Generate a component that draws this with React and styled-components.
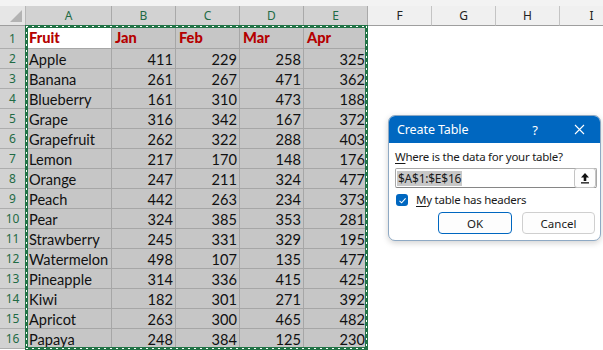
import React from "react";
import styled, { createGlobalStyle } from "styled-components";

const GlobalStyle = createGlobalStyle`
  html, body {
    margin: 0;
    padding: 0;
    background: #fff;
  }
  * {
    box-sizing: border-box;
  }
`;

const COLS = ["A", "B", "C", "D", "E", "F", "G", "H", "I"];
const SELECTED = 5;

const rows = [
  ["Fruit", "Jan", "Feb", "Mar", "Apr"],
  ["Apple", 411, 229, 258, 325],
  ["Banana", 261, 267, 471, 362],
  ["Blueberry", 161, 310, 473, 188],
  ["Grape", 316, 342, 167, 372],
  ["Grapefruit", 262, 322, 288, 403],
  ["Lemon", 217, 170, 148, 176],
  ["Orange", 247, 211, 324, 477],
  ["Peach", 442, 263, 234, 373],
  ["Pear", 324, 385, 353, 281],
  ["Strawberry", 245, 331, 329, 195],
  ["Watermelon", 498, 107, 135, 477],
  ["Pineapple", 314, 336, 415, 425],
  ["Kiwi", 182, 301, 271, 392],
  ["Apricot", 263, 300, 465, 482],
  ["Papaya", 248, 384, 125, 230],
];

const Sheet = styled.div`
  position: relative;
  width: 603px;
  height: 350px;
  overflow: hidden;
  background: #fff;
  display: grid;
  grid-template-columns: 26px 86px repeat(8, 64px);
  grid-template-rows: 6px 20px 23px repeat(15, 20px);
  font-family: Lato, "Liberation Sans", sans-serif;
`;

const Strip = styled.div`
  grid-column: 1 / -1;
  background: #f3f3f3;
`;

const Corner = styled.div`
  background: #e6e6e6;
  border-right: 1px solid #b7b7b7;
  border-bottom: 1px solid #9e9e9e;
  display: flex;
  align-items: flex-end;
  justify-content: flex-end;
  padding: 0 3px 3px 0;
`;

const ColHead = styled.div`
  background: ${(p) => (p.$selected ? "#d2d2d2" : "#f0f0f0")};
  color: ${(p) => (p.$selected ? "#1f6b45" : "#222")};
  border-right: 1px solid ${(p) => (p.$selected ? "#a9a9a9" : "#c4c4c4")};
  border-bottom: 1px solid #9e9e9e;
  font-family: "Noto Sans", "Open Sans", sans-serif;
  font-size: 12px;
  display: flex;
  align-items: center;
  justify-content: center;
  padding-bottom: 1px;
`;

const RowHead = styled.div`
  background: #d2d2d2;
  color: #1f6b45;
  border-right: 1px solid #9e9e9e;
  border-bottom: 1px solid #adadad;
  font-family: "Noto Sans", "Open Sans", sans-serif;
  font-size: 12px;
  display: flex;
  align-items: center;
  justify-content: center;
  padding-top: ${(p) => (p.$first ? "2px" : "0")};
`;

const Cell = styled.div`
  background: ${(p) => (p.$active ? "#fff" : p.$selected ? "#c6c6c6" : "#fff")};
  border-right: 1px solid ${(p) => (p.$selected ? "#a6a6a6" : "transparent")};
  border-bottom: 1px solid ${(p) => (p.$selected ? "#a6a6a6" : "transparent")};
  color: ${(p) => (p.$header ? "#b50000" : "#111")};
  font-weight: ${(p) => (p.$header ? 900 : 400)};
  font-size: 14.6px;
  display: flex;
  align-items: center;
  justify-content: ${(p) => (p.$num ? "flex-end" : "flex-start")};
  padding: ${(p) => (p.$num ? "1px 2px 0 0" : "1px 0 0 3px")};
  white-space: nowrap;
  overflow: hidden;
`;

const ants = "#fff 0 2px, transparent 2px 6px";

const Marquee = styled.div`
  position: absolute;
  left: 25px;
  top: 25px;
  width: 343px;
  height: 325px;
  border: 3px solid #217346;
  pointer-events: none;

  &::after {
    content: "";
    position: absolute;
    top: -2px;
    left: -2px;
    right: -2px;
    bottom: -2px;
    background:
      repeating-linear-gradient(90deg, ${ants}) top / 100% 1px no-repeat,
      repeating-linear-gradient(90deg, ${ants}) bottom / 100% 1px no-repeat,
      repeating-linear-gradient(180deg, ${ants}) left / 1px 100% no-repeat,
      repeating-linear-gradient(180deg, ${ants}) right / 1px 100% no-repeat;
  }
`;

const Dialog = styled.div`
  position: absolute;
  left: 388px;
  top: 115px;
  width: 213px;
  height: 126px;
  background: #fff;
  border: 1px solid #8ea9c4;
  border-radius: 7px;
  overflow: hidden;
  box-shadow: 0 2px 6px rgba(0, 0, 0, 0.18);
  display: flex;
  flex-direction: column;
  font-family: "Noto Sans", "Open Sans", sans-serif;
  font-size: 11px;
  color: #1a1a1a;
`;

const TitleBar = styled.div`
  height: 27px;
  background: #0067c0;
  color: #fff;
  display: flex;
  align-items: center;
  padding: 0 15px 0 8px;
`;

const Title = styled.span`
  flex: 1;
  font-size: 12.5px;
  letter-spacing: -0.1px;
`;

const Help = styled.span`
  font-size: 13px;
  margin-right: 36px;
`;

const Body = styled.div`
  flex: 1;
  display: flex;
  flex-direction: column;
  padding: 7px 3px 0 6px;
  letter-spacing: -0.25px;
`;

const Label = styled.div`
  line-height: 14px;
  font-size: 11.5px;
`;

const Key = styled.u`
  text-underline-offset: 2px;
`;

const RefBox = styled.div`
  margin-top: 4px;
  height: 20px;
  border: 1px solid #a8a8a8;
  border-bottom-color: #868686;
  border-radius: 2px;
  display: flex;
  align-items: center;
  padding: 0 1px 0 1px;
`;

const RefText = styled.span`
  flex: 1;
  display: flex;
  font-size: 12px;
  & > span {
    background: #c8c8c8;
    padding: 0 1px;
    line-height: 15px;
  }
`;

const PickButton = styled.button`
  width: 22px;
  height: 20px;
  margin-right: -1px;
  background: #fdfdfd;
  border: 1px solid #c4c4c4;
  border-radius: 3px;
  display: flex;
  align-items: center;
  justify-content: center;
  padding: 0;
`;

const CheckRow = styled.label`
  margin-top: 5px;
  margin-left: 1px;
  display: flex;
  align-items: center;
  gap: 8px;
  font-size: 11.5px;
  line-height: 14px;
`;

const Box = styled.span`
  width: 12px;
  height: 12px;
  border-radius: 3px;
  background: #0067c0;
  display: flex;
  align-items: center;
  justify-content: center;
`;

const Buttons = styled.div`
  margin-top: 5px;
  display: flex;
  justify-content: flex-end;
  gap: 10px;
  padding-right: 2px;
`;

const Button = styled.button`
  width: ${(p) => (p.$wide ? "74px" : "73px")};
  height: 22px;
  background: #fdfdfd;
  border: 1px solid ${(p) => (p.$primary ? "#0067c0" : "#cfcfcf")};
  border-radius: 4px;
  font-family: "Noto Sans", "Open Sans", sans-serif;
  font-size: 11.5px;
  color: #1a1a1a;
  padding: 0;
`;

const CornerMark = () => (
  <svg width="12" height="12" viewBox="0 0 12 12">
    <polygon points="12,0 12,12 0,12" fill="#b3b3b3" />
  </svg>
);

const CloseIcon = () => (
  <svg width="11" height="11" viewBox="0 0 11 11">
    <path d="M1 1 L10 10 M10 1 L1 10" stroke="#fff" strokeWidth="1.1" />
  </svg>
);

const UploadIcon = () => (
  <svg width="10" height="12" viewBox="0 0 10 12">
    <path d="M5 1 L9 5.5 L6.3 5.5 L6.3 9 L3.7 9 L3.7 5.5 L1 5.5 Z" fill="#111" />
    <rect x="1" y="10.2" width="8" height="1.3" fill="#111" />
  </svg>
);

const CheckIcon = () => (
  <svg width="9" height="9" viewBox="0 0 9 9">
    <path d="M1.5 4.8 L3.6 6.8 L7.6 2.3" stroke="#fff" strokeWidth="1.1" fill="none" />
  </svg>
);

export default function App() {
  return (
    <>
      <GlobalStyle />
      <Sheet>
        <Strip />
        <Corner>
          <CornerMark />
        </Corner>
        {COLS.map((c, i) => (
          <ColHead key={c} $selected={i < SELECTED}>
            {c}
          </ColHead>
        ))}
        {rows.map((row, r) => (
          <React.Fragment key={r}>
            <RowHead $first={r === 0}>{r + 1}</RowHead>
            {COLS.map((c, i) => {
              const value = i < row.length ? row[i] : "";
              return (
                <Cell
                  key={c}
                  $selected={i < SELECTED}
                  $active={r === 0 && i === 0}
                  $header={r === 0}
                  $num={typeof value === "number"}
                >
                  {value}
                </Cell>
              );
            })}
          </React.Fragment>
        ))}
        <Marquee />
        <Dialog>
          <TitleBar>
            <Title>Create Table</Title>
            <Help>?</Help>
            <CloseIcon />
          </TitleBar>
          <Body>
            <Label>
              <Key>W</Key>here is the data for your table?
            </Label>
            <RefBox>
              <RefText>
                <span>$A$1:$E$16</span>
              </RefText>
              <PickButton>
                <UploadIcon />
              </PickButton>
            </RefBox>
            <CheckRow>
              <Box>
                <CheckIcon />
              </Box>
              <span>
                <Key>M</Key>y table has headers
              </span>
            </CheckRow>
            <Buttons>
              <Button $primary $wide>
                OK
              </Button>
              <Button>Cancel</Button>
            </Buttons>
          </Body>
        </Dialog>
      </Sheet>
    </>
  );
}
